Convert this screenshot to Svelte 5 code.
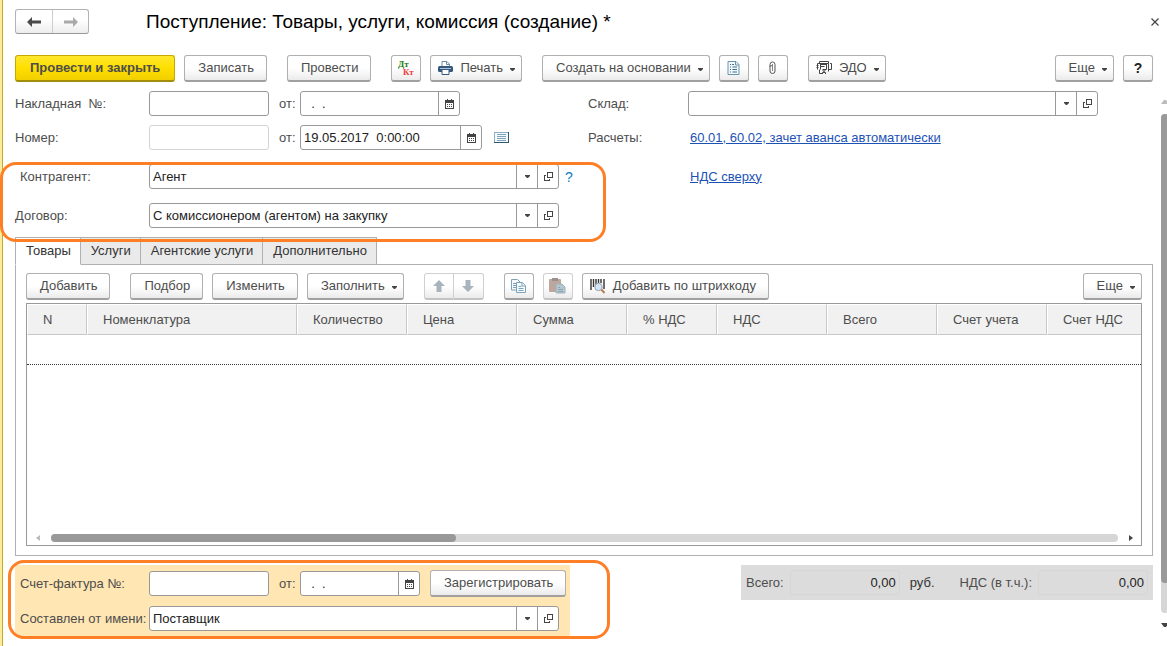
<script>
	let activeTab = $state(0);
	let invoiceNumber = $state('');
	let invoiceDate = $state('  .  .');
	let docNumber = $state('');
	let docDate = $state('19.05.2017  0:00:00');
	let warehouse = $state('');
	let contractor = $state('Агент');
	let contract = $state('С комиссионером (агентом) на закупку');
	let facturaNumber = $state('');
	let facturaDate = $state('  .  .');
	let issuedBy = $state('Поставщик');

	const tabs = ['Товары', 'Услуги', 'Агентские услуги', 'Дополнительно'];

	const columns = [
		{ title: 'N', width: 60 },
		{ title: 'Номенклатура', width: 210 },
		{ title: 'Количество', width: 110 },
		{ title: 'Цена', width: 110 },
		{ title: 'Сумма', width: 110 },
		{ title: '% НДС', width: 90 },
		{ title: 'НДС', width: 110 },
		{ title: 'Всего', width: 110 },
		{ title: 'Счет учета', width: 110 },
		{ title: 'Счет НДС' }
	];
</script>

{#snippet caret()}
	<svg class="caret" width="5" height="3" viewBox="0 0 5 3"><path d="M0 0h5v1L3 3H2L0 1z" fill="#444" /></svg>
{/snippet}

{#snippet calendarButton()}
	<button class="field-btn" aria-label="Выбрать дату">
		<svg width="9" height="10" viewBox="0 0 9 10" shape-rendering="crispEdges">
			<path d="M0 1h9v9H0z" fill="#444" />
			<path d="M2 0h1v1H2zM6 0h1v1H6z" fill="#444" />
			<path d="M1 4h7v5H1z" fill="#fff" />
			<path d="M2 5h1v1H2zM4 5h1v1H4zM6 5h1v1H6zM2 7h1v1H2zM4 7h1v1H4zM6 7h1v1H6z" fill="#444" />
		</svg>
	</button>
{/snippet}

{#snippet pickButtons()}
	<button class="field-btn" aria-label="Выбрать из списка">
		<svg width="5" height="3" viewBox="0 0 5 3"><path d="M0 0h5v1L3 3H2L0 1z" fill="#444" /></svg>
	</button>
	<button class="field-btn" aria-label="Открыть">
		<svg width="9" height="9" viewBox="0 0 9 9" shape-rendering="crispEdges" fill="none" stroke="#444">
			<path d="M3.5 .5h5v5h-5zM2 3.5H.5v5h5V7" />
		</svg>
	</button>
{/snippet}

<div class="window">
	<main class="form">
		<header class="title-bar">
			<div class="nav">
				<button aria-label="Назад">
					<svg width="14" height="10" viewBox="0 0 14 10"><path d="M0 5l5-5v3.5h9v3H5V10z" fill="#4a4a4a" /></svg>
				</button>
				<button aria-label="Вперед">
					<svg width="14" height="10" viewBox="0 0 14 10"><path d="M14 5L9 0v3.500H0v3h9V10z" fill="#aaa" /></svg>
				</button>
			</div>
			<h1>Поступление: Товары, услуги, комиссия (создание) *</h1>
			<button class="close" aria-label="Закрыть">
				<svg width="8" height="8" viewBox="0 0 8 8" stroke="#444" stroke-width="1.2"><path d="M.5.5l7 7M7.5.5l-7 7" /></svg>
			</button>
		</header>

		<div class="toolbar commands">
			<button class="btn primary">Провести и закрыть</button>
			<button class="btn">Записать</button>
			<button class="btn group-start">Провести</button>
			<button class="btn icon group-start" aria-label="Дт Кт">
				<svg width="16" height="16" viewBox="0 0 16 16" font-family="Liberation Serif, serif" font-size="9" font-weight="bold">
					<text x="0" y="7" fill="#1d7d0c">Дт</text>
					<text x="5" y="15" fill="#f23c3c">Кт</text>
				</svg>
			</button>
			<button class="btn with-icon">
				<svg width="15" height="14" viewBox="0 0 15 14">
					<path d="M4 5V.5h5L11.500 3v2" fill="#fff" stroke="#6e8ba5" />
					<path d="M8.500 .5V3.500h3" fill="none" stroke="#6e8ba5" />
					<rect x="0" y="5" width="15" height="6" rx="1.500" fill="#36597b" />
					<path d="M2 7.500h11" stroke="#a8c4dc" />
					<path d="M4 8.500h7v5H4z" fill="#fff" stroke="#36597b" />
				</svg>
				Печать {@render caret()}
			</button>
			<button class="btn group-start">Создать на основании {@render caret()}</button>
			<button class="btn icon" aria-label="Отчет">
				<svg width="13" height="14" viewBox="0 0 13 14" fill="none" stroke="#6b93ab">
					<path d="M1 .5h8L12 3.500v10H1z" fill="#f2f9fd" />
					<path d="M8.500 .5v3.500H12" />
					<path d="M3 3.500h1M5 3.500h2M3 6h1M5.500 6H10M3 8.500h1M5.500 8.500H10M3 11h1M5.500 11H10" stroke="#3f6d8a" />
				</svg>
			</button>
			<button class="btn icon" aria-label="Присоединенные файлы">
				<svg width="7" height="14" viewBox="0 0 7 14" fill="none" stroke="#555">
					<path d="M1 6V3.500a2.500 2.500 0 0 1 5 0V10a2.500 2.500 0 0 1-5 0V6.500a1 1 0 0 1 2.500-1V10" />
					<path d="M3.500 3v7" stroke="#888" />
				</svg>
			</button>
			<button class="btn with-icon group-start">
				<svg width="16" height="14" viewBox="0 0 16 14" fill="none" stroke="#444">
					<path d="M3.500 2.500V.5h9v2M1.500 8.500v-6h11v8M.5 4.500h2M.5 6.500h2M4.500 2.500v6M4.500 3.500h6M4.500 5.500h4M10.500 2.500v6M14 2.500h1.500v6H13M3.500 8.500v4H6M6.500 8.500h4" />
					<circle cx="8" cy="9.500" r="1" /><path d="M6.500 13v-1.500h3V13" />
				</svg>
				ЭДО {@render caret()}
			</button>
			<button class="btn push">Еще {@render caret()}</button>
			<button class="btn icon help-btn">?</button>
		</div>

		<div class="fields">
			<div class="row">
				<label class="caption" for="invoice-number">Накладная&nbsp; №:</label>
				<div class="field short"><input id="invoice-number" bind:value={invoiceNumber} /></div>
				<label class="from" for="invoice-date">от:</label>
				<div class="field date"><input id="invoice-date" bind:value={invoiceDate} />{@render calendarButton()}</div>
			</div>
			<div class="row">
				<label class="caption side" for="warehouse">Склад:</label>
				<div class="field grow"><input id="warehouse" bind:value={warehouse} />{@render pickButtons()}</div>
			</div>
			<div class="row">
				<label class="caption" for="doc-number">Номер:</label>
				<div class="field short muted"><input id="doc-number" bind:value={docNumber} /></div>
				<label class="from" for="doc-date">от:</label>
				<div class="field datetime"><input id="doc-date" bind:value={docDate} />{@render calendarButton()}</div>
				<svg class="list-icon" width="15" height="11" viewBox="0 0 15 11" shape-rendering="crispEdges">
					<path d="M.5 .5h14v10H.5z" fill="#f4fafc" stroke="#8fb0c4" />
					<path d="M14.500 0v11M0 10.500h15" stroke="#33586e" />
					<path d="M3 2.500h9M3 4.500h9M3 6.500h9M3 8.500h9" stroke="#7fa3bb" />
				</svg>
			</div>
			<div class="row">
				<span class="caption side">Расчеты:</span>
				<a href="#settlements">60.01, 60.02, зачет аванса автоматически</a>
			</div>
			<div class="row">
				<label class="caption indent" for="contractor">Контрагент:</label>
				<div class="field wide"><input id="contractor" bind:value={contractor} />{@render pickButtons()}</div>
				<button class="hint">?</button>
			</div>
			<div class="row">
				<span class="caption side"></span>
				<a href="#vat">НДС сверху</a>
			</div>
			<div class="row">
				<label class="caption" for="contract">Договор:</label>
				<div class="field wide"><input id="contract" bind:value={contract} />{@render pickButtons()}</div>
			</div>
			<div class="mark mark-contract"></div>
		</div>

		<div class="tabs" role="tablist">
			{#each tabs as tab, index}
				<button role="tab" class="tab" class:active={index === activeTab} aria-selected={index === activeTab} onclick={() => (activeTab = index)}>{tab}</button>
			{/each}
		</div>

		<section class="panel">
			<div class="toolbar">
				<button class="btn">Добавить</button>
				<button class="btn group-start">Подбор</button>
				<button class="btn">Изменить</button>
				<button class="btn">Заполнить {@render caret()}</button>
				<div class="btn-pair group-start">
					<button class="btn icon faded" aria-label="Вверх">
						<svg width="12" height="12" viewBox="0 0 12 12"><path d="M6 0l6 6H8.500v6h-5V6H0z" fill="#a7b4bc" /></svg>
					</button>
					<button class="btn icon faded" aria-label="Вниз">
						<svg width="12" height="12" viewBox="0 0 12 12"><path d="M6 12l6-6H8.500V0h-5v6H0z" fill="#a7b4bc" /></svg>
					</button>
				</div>
				<button class="btn icon group-start" aria-label="Копировать">
					<svg width="15" height="14" viewBox="0 0 15 14" fill="#f4fafd" stroke="#7ea3b8">
						<path d="M.5 .5h6L9 3v8H.5z" />
						<path d="M2 4.500h3M2 6.500h3M2 8.500h3" />
						<path d="M5.500 3.500h6l3 3v7h-9z" />
						<path d="M11 3.500v3.500h3.500M7.500 7.500h3M7.500 9.500h5M7.500 11.500h5" />
					</svg>
				</button>
				<button class="btn icon faded" aria-label="Вставить">
					<svg width="17" height="16" viewBox="0 0 17 16">
						<rect x="0" y="1" width="12" height="13" rx="1" fill="#bda79c" />
						<path d="M3 0h6v3H3z" fill="#98928e" />
						<path d="M7 6h6l3 3v6H7z" fill="#b4c6d0" stroke="#9eb0ba" />
						<path d="M9 9.500h2M9 11.500h5M9 13.500h5" stroke="#8ea4b0" />
					</svg>
				</button>
				<button class="btn with-icon">
					<svg width="16" height="16" viewBox="0 0 16 16">
						<path d="M1 1v11M3.500 1v8M6 1v7M8.500 1v4M11 1v4M14 1v10" stroke="#333" stroke-width="1.400" />
						<path d="M11 11l3.500 4" stroke="#b98054" stroke-width="2" />
						<circle cx="8.500" cy="9" r="3.700" fill="#d4e5f5" stroke="#9a9fae" />
					</svg>
					Добавить по штрихкоду
				</button>
				<button class="btn push">Еще {@render caret()}</button>
			</div>

			<div class="list">
				<table>
					<colgroup>
						{#each columns as column}
							<col style={column.width ? `width: ${column.width}px` : null} />
						{/each}
					</colgroup>
					<thead>
						<tr>
							{#each columns as column}
								<th scope="col">{column.title}</th>
							{/each}
						</tr>
					</thead>
					<tbody>
						<tr><td colspan={columns.length}></td></tr>
					</tbody>
				</table>
				<div class="h-scroll">
					<svg width="4" height="6" viewBox="0 0 4 6"><path d="M4 0v6L0 3z" fill="#bbb" /></svg>
					<div class="h-track"><div class="h-thumb"></div></div>
					<svg width="4" height="6" viewBox="0 0 4 6"><path d="M0 0v6l4-3z" fill="#444" /></svg>
				</div>
			</div>
		</section>

		<footer class="bottom">
			<div class="factura">
				<div class="row">
					<label class="caption" for="factura-number">Счет-фактура №:</label>
					<div class="field short"><input id="factura-number" bind:value={facturaNumber} /></div>
					<label class="from" for="factura-date">от:</label>
					<div class="field date-small"><input id="factura-date" bind:value={facturaDate} />{@render calendarButton()}</div>
					<button class="btn register">Зарегистрировать</button>
				</div>
				<div class="row">
					<label class="caption" for="issued-by">Составлен от имени:</label>
					<div class="field wide"><input id="issued-by" bind:value={issuedBy} />{@render pickButtons()}</div>
				</div>
				<div class="mark mark-factura"></div>
			</div>
			<div class="totals">
				<label for="total">Всего:</label>
				<input id="total" value="0,00" readonly />
				<span class="currency">руб.</span>
				<label for="total-vat">НДС (в т.ч.):</label>
				<input id="total-vat" value="0,00" readonly />
			</div>
		</footer>
	</main>

	<div class="v-scroll">
		<svg width="8" height="4" viewBox="0 0 8 4"><path d="M0 4h8L5 0H3z" fill="#bbb" /></svg>
		<div class="v-track"><div class="v-thumb"></div></div>
		<svg width="8" height="4" viewBox="0 0 8 4"><path d="M0 0h8L5 4H3z" fill="#444" /></svg>
	</div>
</div>

<style>
	:global(body) {
		margin: 0;
		background: #fff;
	}

	.window {
		box-sizing: border-box;
		display: flex;
		min-height: 100vh;
		padding-left: 3px;
		overflow: hidden;
		background: linear-gradient(90deg, #fbec9a 2px, #c2a92c 2px, #c2a92c 3px, #fff 3px);
		font-family: 'Liberation Sans', Arial, sans-serif;
		font-size: 13px;
		line-height: 16px;
		color: #4d4d4d;
	}

	button,
	input {
		box-sizing: border-box;
		margin: 0;
		font: inherit;
		color: inherit;
	}

	button {
		display: flex;
		align-items: center;
		justify-content: center;
		padding: 0;
		border: 0;
		background: none;
		white-space: nowrap;
		cursor: pointer;
	}

	svg {
		flex: none;
	}

	a {
		color: #1d52b5;
	}

	.form {
		flex: 1;
		min-width: 0;
		padding: 9px 8px 8px 12px;
	}

	/* Title */
	.title-bar {
		display: flex;
		align-items: center;
		height: 25px;
		margin-right: -6px;
	}

	.nav {
		display: flex;
		box-sizing: border-box;
		height: 25px;
		border: 1px solid #b3b3b3;
		border-bottom-color: #999;
		border-radius: 3px;
		background: linear-gradient(#fff 40%, #ededed);
	}

	.nav button {
		width: 36px;
	}

	.nav button + button {
		border-left: 1px solid #ccc;
	}

	h1 {
		flex: 1;
		margin: 0 0 0 57px;
		font-size: 19px;
		font-weight: 400;
		line-height: 24px;
		color: #000;
	}

	.close {
		width: 8px;
		height: 8px;
	}

	/* Command bars */
	.toolbar {
		display: flex;
		gap: 9px;
	}

	.commands {
		margin: 21px 0 9px;
	}

	.btn {
		flex: none;
		height: 27px;
		padding: 0 12px 0 13px;
		border: 1px solid #b0b0b0;
		border-bottom: 2px solid #a0a0a0;
		border-radius: 3px;
		background: linear-gradient(#fff 50%, #ebebeb);
	}

	.btn.primary {
		padding: 0 14px;
		border-color: #c5a900;
		border-bottom-color: #a38d0a;
		background: linear-gradient(#ffe72e, #ffdf00 50%, #f0cf00);
		font-weight: 700;
	}

	.btn.icon {
		width: 30px;
		padding: 0;
	}

	.btn.with-icon {
		padding-left: 7px;
	}

	.btn.with-icon svg:first-child {
		margin-right: 7px;
	}

	.btn.faded {
		border-color: #d0d0d0;
		border-bottom-color: #c4c4c4;
	}

	.btn.help-btn {
		font-size: 14px;
		font-weight: 700;
		color: #222;
	}

	.group-start {
		margin-left: 11px;
	}

	.push {
		margin-left: auto;
	}

	.btn:has(.caret) {
		padding-right: 6px;
	}

	.caret {
		margin: 2px 0 0 7px;
	}

	.btn-pair {
		display: flex;
	}

	.btn-pair .btn:first-child {
		border-radius: 3px 0 0 3px;
	}

	.btn-pair .btn:last-child {
		border-left: 0;
		border-radius: 0 3px 3px 0;
	}

	/* Fields */
	.fields {
		position: relative;
		display: grid;
		grid-template-columns: 573px 1fr;
		grid-template-rows: 34px 39px 39px 25px;
		padding-right: 55px;
	}

	.row {
		display: flex;
		align-items: center;
		height: 25px;
	}

	.caption {
		box-sizing: border-box;
		flex: none;
		width: 134px;
		white-space: nowrap;
	}

	.caption.side {
		width: 100px;
	}

	.caption.side + a {
		margin-left: 2px;
	}

	.caption.indent {
		padding-left: 5px;
	}

	.from {
		flex: none;
		box-sizing: border-box;
		width: 31px;
		padding-left: 10px;
	}

	.field {
		box-sizing: border-box;
		display: flex;
		flex: none;
		height: 25px;
		border: 1px solid #999;
		border-radius: 3px;
		background: #fff;
		overflow: hidden;
	}

	.field.muted {
		border-color: #d4d4d4;
	}

	.field.short {
		width: 120px;
	}

	.field.date {
		width: 160px;
	}

	.field.datetime {
		width: 182px;
	}

	.field.date-small {
		width: 120px;
	}

	.field.wide {
		width: 410px;
	}

	.field.grow {
		flex: 1;
		min-width: 0;
	}

	.field input {
		flex: 1;
		min-width: 0;
		padding: 0 3px;
		border: 0;
		outline: 0;
		background: none;
		color: #222;
		white-space: pre;
	}

	.field-btn {
		flex: none;
		width: 21px;
		border-left: 1px solid #999;
	}

	.list-icon {
		margin-left: 12px;
	}

	.hint {
		margin-left: 6px;
		font-size: 14px;
		color: #0f7ac0;
	}

	/* Outlines around related fields */
	.mark {
		position: absolute;
		z-index: 1;
		box-sizing: border-box;
		border: 3px solid #ff7f27;
		border-radius: 16px;
		pointer-events: none;
	}

	.mark-contract {
		top: 71px;
		left: -15px;
		width: 606px;
		height: 80px;
	}

	.mark-factura {
		top: -5px;
		left: -7px;
		width: 602px;
		height: 79px;
	}

	/* Tabs */
	.tabs {
		position: relative;
		display: flex;
		margin-top: 9px;
	}

	.tab {
		height: 28px;
		padding: 0 9px 0 10px;
		border: 1px solid #b0b0b0;
		border-left: 0;
		background: #eaeaea;
		color: #333;
	}

	.tab:first-child {
		border-left: 1px solid #b0b0b0;
	}

	.tab.active {
		border-bottom-color: #fff;
		background: #fff;
	}

	.panel {
		margin-top: -1px;
		padding: 8px 10px 9px;
		border: 1px solid #b0b0b0;
	}

	/* Goods list */
	.list {
		display: flex;
		flex-direction: column;
		box-sizing: border-box;
		min-height: 243px;
		margin-top: 3px;
		border: 1px solid #999;
	}

	table {
		width: 100%;
		table-layout: fixed;
		border-collapse: separate;
		border-spacing: 0;
	}

	th {
		box-sizing: border-box;
		height: 31px;
		padding: 0 0 0 15px;
		border: 1px solid #fff;
		border-right-color: #c8c8c8;
		border-bottom-color: #c8c8c8;
		background: #f1f1f1;
		font-weight: 400;
		text-align: left;
		white-space: nowrap;
		overflow: hidden;
	}

	th:last-child {
		border-right: 0;
	}

	td {
		height: 29px;
		padding: 0;
		border-bottom: 1px dotted #333;
	}

	.h-scroll {
		display: flex;
		align-items: center;
		gap: 11px;
		margin-top: auto;
		padding: 3px 8px 3px 9px;
	}

	.h-track {
		flex: 1;
		height: 8px;
		border-radius: 4px;
		background: #d6d6d6;
	}

	.h-thumb {
		width: 38%;
		height: 8px;
		border-radius: 4px;
		background: #999;
	}

	/* Bottom part */
	.bottom {
		display: flex;
		align-items: flex-start;
		justify-content: space-between;
		margin-top: 9px;
	}

	.factura {
		position: relative;
		box-sizing: border-box;
		width: 555px;
		padding: 6px 5px 5px;
		background: #ffe6b3;
	}

	.factura .row + .row {
		margin-top: 10px;
	}

	.factura .caption {
		width: 129px;
	}

	.register {
		margin-left: 10px;
	}

	.totals {
		display: flex;
		align-items: center;
		box-sizing: border-box;
		height: 35px;
		padding: 0 5px;
		background: #dcdcdc;
	}

	.totals input {
		width: 110px;
		height: 25px;
		margin-left: 6px;
		padding: 0 3px;
		border: 1px solid #d6d6d6;
		border-radius: 3px;
		background: none;
		color: #222;
		text-align: right;
	}

	.currency {
		margin: 0 25px 0 10px;
		color: #333;
	}

	/* Page scrollbar */
	.v-scroll {
		display: flex;
		flex: none;
		flex-direction: column;
		align-items: center;
		gap: 10px;
		width: 8px;
		margin-right: -2px;
		padding: 100px 0 19px;
	}

	.v-track {
		flex: 1;
		width: 8px;
		border-radius: 4px;
		background: #d6d6d6;
	}

	.v-thumb {
		width: 8px;
		height: 94%;
		border-radius: 4px;
		background: #999;
	}
</style>
